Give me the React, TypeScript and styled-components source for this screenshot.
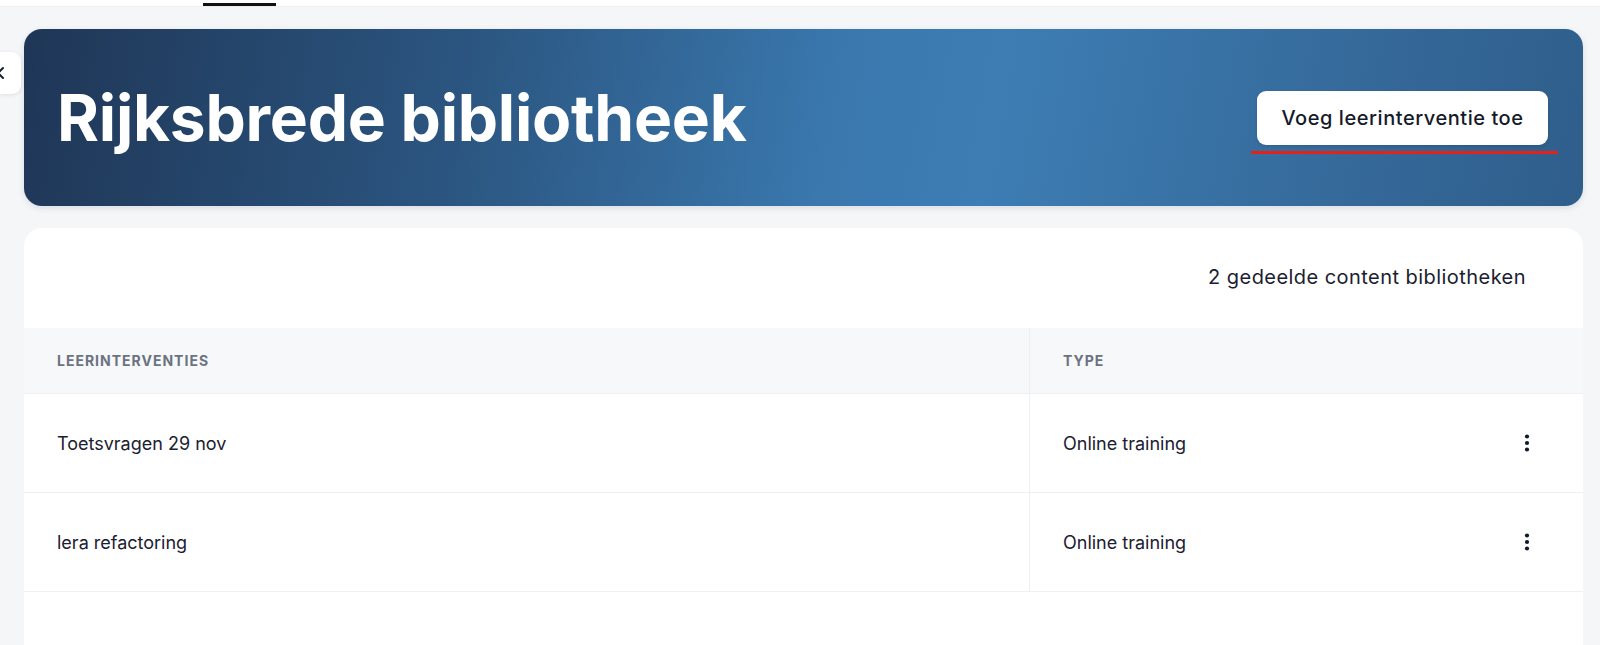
import React from "react";
import styled, { createGlobalStyle } from "styled-components";

const Global = createGlobalStyle`
  html, body { margin: 0; padding: 0; }
  body {
    background: #f5f6f8;
    font-family: Inter, "Noto Sans", "Liberation Sans", sans-serif;
    color: #1b2030;
    overflow: hidden;
  }
  * { box-sizing: border-box; }
`;

const Page = styled.div`
  position: relative;
  width: 1600px;
  height: 645px;
  overflow: hidden;
  background: #f5f6f8;
`;

const TopBar = styled.div`
  height: 7px;
  background: #ffffff;
  border-bottom: 1px solid #eceef1;
  display: flex;
  align-items: flex-end;
`;

const ActiveTab = styled.div`
  margin-left: 203px;
  width: 73px;
  height: 3px;
  background: #111111;
`;

const SideTab = styled.div`
  position: absolute;
  left: 0;
  top: 52px;
  width: 21px;
  height: 42px;
  background: #ffffff;
  border-radius: 0 9px 9px 0;
  box-shadow: 0 1px 4px rgba(20, 30, 50, 0.1);
  overflow: hidden;
  display: flex;
  align-items: center;
`;

const Main = styled.main`
  display: flex;
  flex-direction: column;
  gap: 22px;
  padding: 22px 17px 0 24px;
`;

const Banner = styled.section`
  height: 177px;
  border-radius: 18px;
  background: linear-gradient(
    100deg,
    #1f3656 0%,
    #2b5580 28%,
    #3a78ae 52%,
    #3d7db3 62%,
    #35699a 85%,
    #2f5e8b 100%
  );
  box-shadow: 0 2px 6px rgba(20, 40, 70, 0.12);
  display: flex;
  align-items: center;
  justify-content: space-between;
  padding: 0 35px 0 33px;
`;

const Title = styled.h1`
  margin: 0;
  color: #ffffff;
  font-family: Inter, "Noto Sans", sans-serif;
  font-weight: 700;
  font-size: 64px;
  letter-spacing: -0.25px;
  line-height: 1;
`;

const ButtonWrap = styled.div`
  position: relative;
  &::after {
    content: "";
    position: absolute;
    left: -6px;
    right: -10px;
    bottom: -9px;
    height: 3px;
    background: #e3221c;
  }
`;

const AddButton = styled.button`
  width: 291px;
  height: 54px;
  border: none;
  border-radius: 9px;
  background: #ffffff;
  box-shadow: 0 1px 3px rgba(0, 0, 0, 0.15);
  font-family: Inter, "Noto Sans", sans-serif;
  font-size: 20px;
  font-weight: 500;
  letter-spacing: 0.55px;
  color: #141a2a;
  cursor: pointer;
`;

const Card = styled.section`
  background: #ffffff;
  border-radius: 18px 18px 0 0;
  min-height: 420px;
  display: flex;
  flex-direction: column;
`;

const CardTop = styled.div`
  height: 100px;
  display: flex;
  align-items: center;
  justify-content: flex-end;
  padding: 0 57px 2px 0;
  font-size: 20px;
  letter-spacing: 0.45px;
  color: #1b2030;
`;

const Row = styled.div<{ $head?: boolean }>`
  display: grid;
  grid-template-columns: 1005px 1fr;
  height: ${(p) => (p.$head ? "66px" : "99px")};
  background: ${(p) => (p.$head ? "#f7f8fa" : "#ffffff")};
  border-bottom: 1px solid #eef0f3;
`;

const Cell = styled.div<{ $head?: boolean; $divider?: boolean }>`
  display: flex;
  align-items: center;
  justify-content: space-between;
  padding: 0 48px 0 33px;
  border-left: ${(p) => (p.$divider ? "1px solid #eef0f3" : "none")};
  font-size: ${(p) => (p.$head ? "14px" : "18px")};
  font-weight: ${(p) => (p.$head ? 700 : 400)};
  letter-spacing: ${(p) => (p.$head ? "1px" : "0")};
  text-transform: ${(p) => (p.$head ? "uppercase" : "none")};
  color: ${(p) => (p.$head ? "#6b7280" : "#1b2030")};
`;

const KebabButton = styled.button`
  border: none;
  background: transparent;
  padding: 0;
  width: 16px;
  height: 24px;
  display: flex;
  align-items: center;
  justify-content: center;
  cursor: pointer;
`;

const Kebab = () => (
  <KebabButton aria-label="Meer acties">
    <svg width="6" height="18" viewBox="0 0 6 18">
      <circle cx="3" cy="2.5" r="2.1" fill="#111827" />
      <circle cx="3" cy="9" r="2.1" fill="#111827" />
      <circle cx="3" cy="15.5" r="2.1" fill="#111827" />
    </svg>
  </KebabButton>
);

const rows = [
  { name: "Toetsvragen 29 nov", type: "Online training" },
  { name: "lera refactoring", type: "Online training" },
];

export default function App() {
  return (
    <Page>
      <Global />
      <TopBar>
        <ActiveTab />
      </TopBar>
      <SideTab>
        <svg width="14" height="14" viewBox="0 0 14 14" style={{ marginLeft: -9 }}>
          <path d="M2 2 L12 12 M12 2 L2 12" stroke="#1b2030" strokeWidth="2" strokeLinecap="round" />
        </svg>
      </SideTab>
      <Main>
        <Banner>
          <Title>Rijksbrede bibliotheek</Title>
          <ButtonWrap>
            <AddButton>Voeg leerinterventie toe</AddButton>
          </ButtonWrap>
        </Banner>
        <Card>
          <CardTop>2 gedeelde content bibliotheken</CardTop>
          <Row $head>
            <Cell $head>Leerinterventies</Cell>
            <Cell $head $divider>Type</Cell>
          </Row>
          {rows.map((r) => (
            <Row key={r.name}>
              <Cell>{r.name}</Cell>
              <Cell $divider>
                {r.type}
                <Kebab />
              </Cell>
            </Row>
          ))}
        </Card>
      </Main>
    </Page>
  );
}
